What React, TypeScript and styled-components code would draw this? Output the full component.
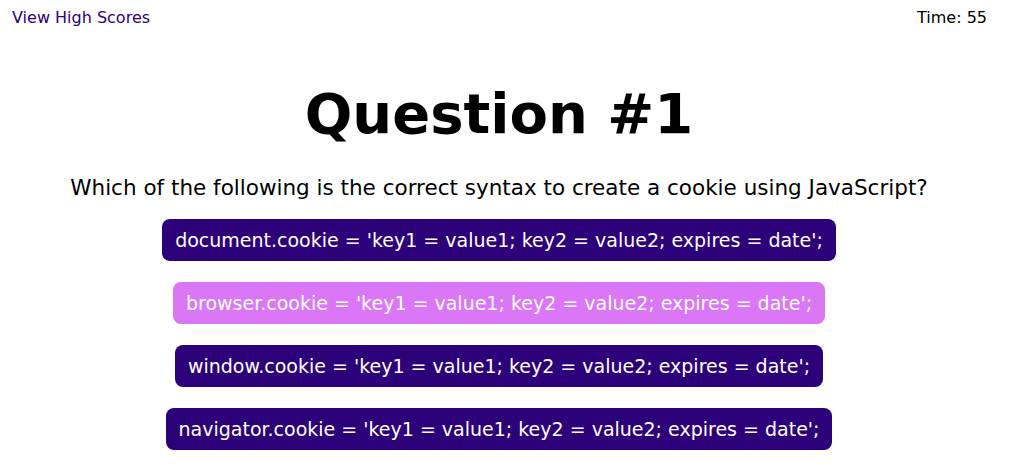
import React from "react";
import styled, { createGlobalStyle } from "styled-components";

const Global = createGlobalStyle`
  html, body { margin: 0; padding: 0; background: #ffffff; }
  body { font-family: "DejaVu Sans", Verdana, sans-serif; color: #000; }
`;

const Page = styled.div`
  display: flex;
  flex-direction: column;
  align-items: stretch;
`;

const Header = styled.header`
  display: flex;
  justify-content: space-between;
  align-items: center;
  padding: 8px 25px 0 12px;
  font-size: 16px;
  line-height: 19px;
`;

const ScoresLink = styled.a`
  color: #2d0179;
  text-decoration: none;
  cursor: pointer;
`;

const Timer = styled.span`
  color: #000;
`;

const Main = styled.main`
  display: flex;
  flex-direction: column;
  align-items: center;
  padding-right: 14px;
`;

const Title = styled.h1`
  margin: 54px 0 0;
  font-size: 56px;
  line-height: 66px;
  font-weight: bold;
`;

const Prompt = styled.p`
  margin: 28px 0 0;
  font-size: 21.5px;
  line-height: 25px;
`;

const Choices = styled.div`
  display: flex;
  flex-direction: column;
  align-items: center;
  gap: 21px;
  margin-top: 19px;
`;

const Choice = styled.button<{ $tone: "dark" | "light" }>`
  font-family: inherit;
  font-size: 19px;
  line-height: 22px;
  color: #ffffff;
  background: ${(p) => (p.$tone === "light" ? "#db77f6" : "#2d0179")};
  border: none;
  border-radius: 8px;
  padding: 10px 13px;
  height: 42px;
  cursor: pointer;
`;

const answers: { text: string; tone: "dark" | "light" }[] = [
  { text: "document.cookie = 'key1 = value1; key2 = value2; expires = date';", tone: "dark" },
  { text: "browser.cookie = 'key1 = value1; key2 = value2; expires = date';", tone: "light" },
  { text: "window.cookie = 'key1 = value1; key2 = value2; expires = date';", tone: "dark" },
  { text: "navigator.cookie = 'key1 = value1; key2 = value2; expires = date';", tone: "dark" },
];

export default function App() {
  return (
    <Page>
      <Global />
      <Header>
        <ScoresLink>View High Scores</ScoresLink>
        <Timer>Time: 55</Timer>
      </Header>
      <Main>
        <Title>Question #1</Title>
        <Prompt>Which of the following is the correct syntax to create a cookie using JavaScript?</Prompt>
        <Choices>
          {answers.map((a) => (
            <Choice key={a.text} $tone={a.tone}>
              {a.text}
            </Choice>
          ))}
        </Choices>
      </Main>
    </Page>
  );
}
